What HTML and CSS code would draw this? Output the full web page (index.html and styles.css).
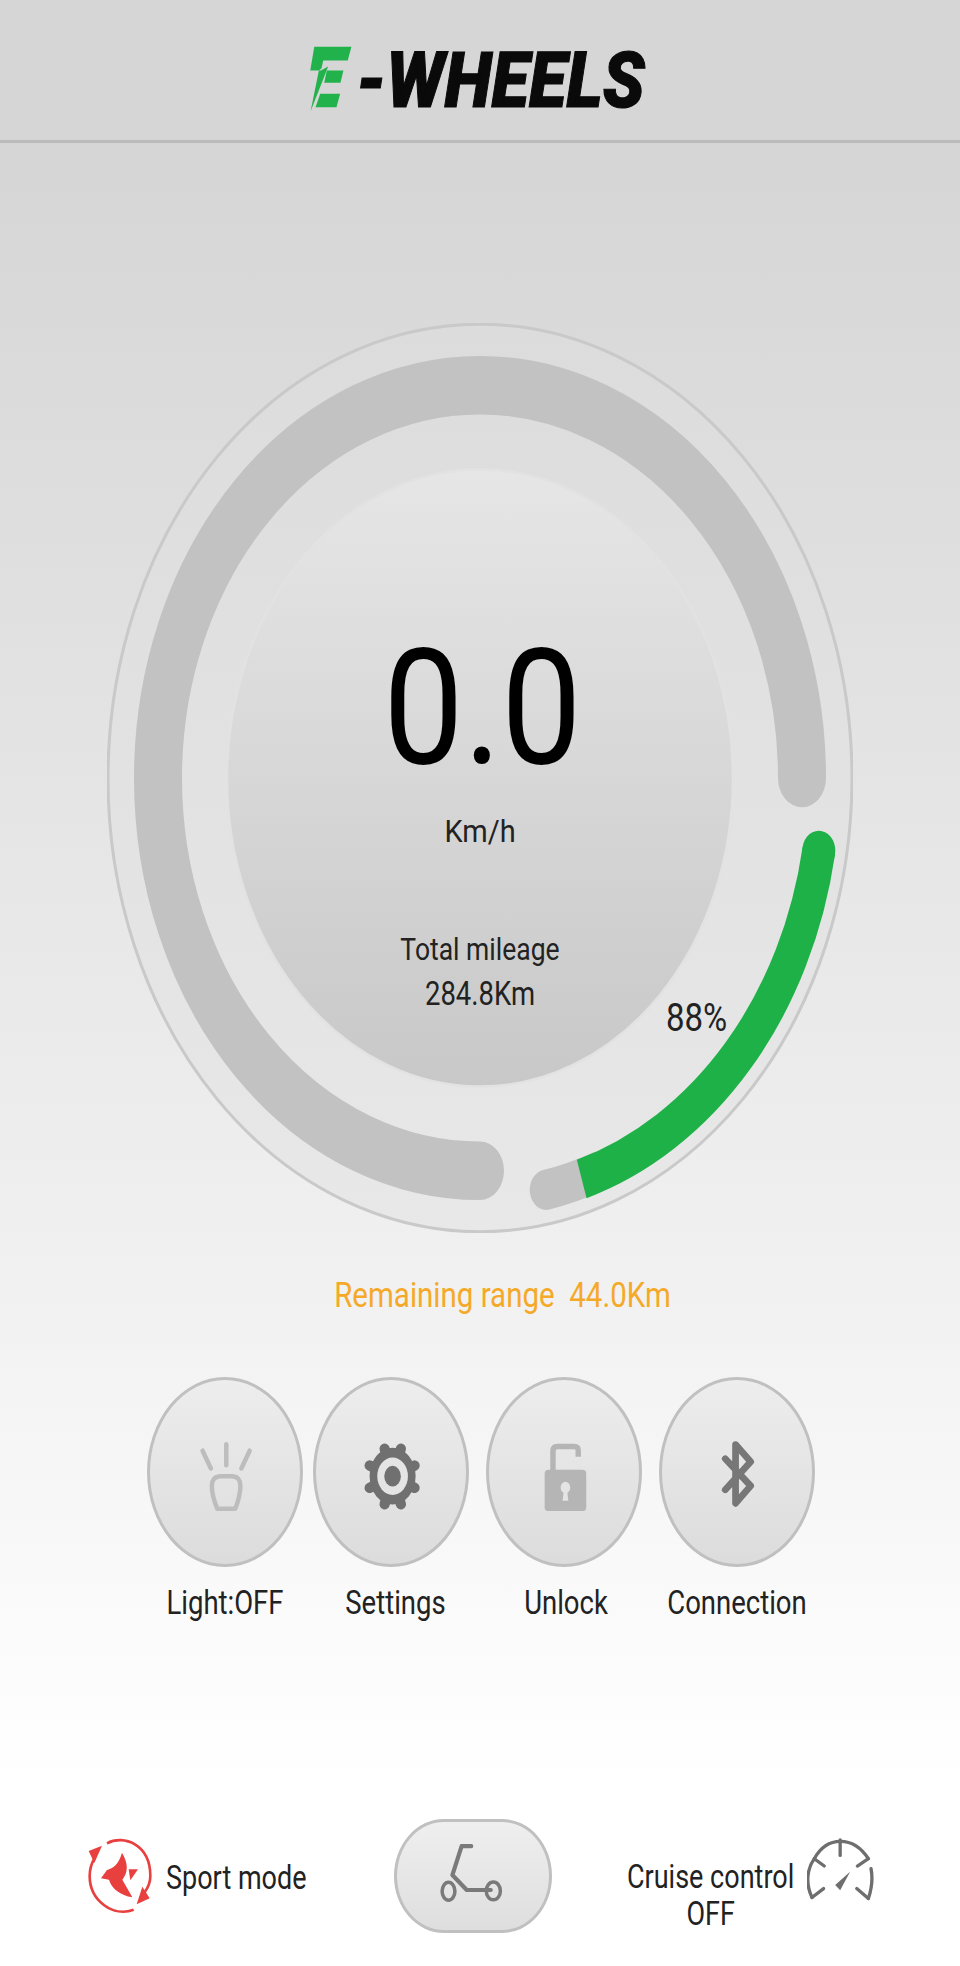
FILE: index.html
```html
<!DOCTYPE html>
<html lang="en">
<head>
    <meta charset="UTF-8">
    <meta name="viewport" content="width=device-width, initial-scale=1.0">
    <title>E-Wheels</title>
    <link rel="stylesheet" href="styles.css">
</head>
<body>
    <div id="wrapper">
        <header class="topBar">
            <svg class="logoMark" viewBox="96 145 125 205" aria-hidden="true">
                <polygon points="108,150 220,150 209,192 135,192 130,215 122,222 97,345 150,210 128,222 96,222" fill="#22b24c"/>
                <polygon points="146,222 196,222 187,259 138,259" fill="#22b24c"/>
                <polygon points="126,292 186,292 175,333 112,333" fill="#22b24c"/>
            </svg>
            <span class="logoText">-WHEELS</span>
        </header>

        <div class="gauge">
            <svg class="gaugeArt" viewBox="0 0 746 746" preserveAspectRatio="none" aria-hidden="true">
                <defs>
                    <linearGradient id="outerFill" x1="0" y1="0" x2="0" y2="1">
                        <stop offset="0" stop-color="#dcdcdc"/>
                        <stop offset="1" stop-color="#e8e8e8"/>
                    </linearGradient>
                    <linearGradient id="innerFill" x1="0" y1="0" x2="0" y2="1">
                        <stop offset="0" stop-color="#e6e6e6"/>
                        <stop offset="1" stop-color="#c8c8c8"/>
                    </linearGradient>
                </defs>
                <circle class="outerRing" cx="373" cy="373" r="372"/>
                <path class="track" d="M373 695 A322 322 0 1 1 695 373"/>
                <circle class="innerDisc" cx="373" cy="373" r="253"/>
                <path class="tail" d="M490 696 A344 344 0 0 1 439.2 710.6"/>
                <path class="charge" d="M711.8 432.7 A344 344 0 0 1 474.7 701.7"/>
                <circle class="chargeCap" cx="711.8" cy="432.7" r="16.5"/>
            </svg>
            <div class="readout">
                <div class="speed">0.0</div>
                <div class="unit tall">Km/h</div>
                <div class="mileage tall">Total mileage</div>
                <div class="mileageValue tall">284.8Km</div>
            </div>
            <div class="percent">88%</div>
        </div>

        <div class="range tall">Remaining range&nbsp; 44.0Km</div>

        <div class="controls">
            <div class="control">
                <button class="roundBtn" type="button">
                    <svg viewBox="50 52 468 570" preserveAspectRatio="none" aria-hidden="true">
                        <g fill="none" stroke="#bdbdbd" stroke-width="14" stroke-linecap="round" stroke-linejoin="round">
                            <path d="M214 271 L240 326 M288 251 L288 316 M361 271 L335 326"/>
                            <path d="M268 350 L308 350 Q332 352 332 380 Q332 410 316 451 L260 451 Q243 410 243 380 Q243 352 268 350 Z"/>
                        </g>
                    </svg>
                </button>
                <span class="ctrlLabel tall">Light:OFF</span>
            </div>
            <div class="control control-settings">
                <button class="roundBtn" type="button">
                    <svg viewBox="547 52 470 570" preserveAspectRatio="none" aria-hidden="true">
                        <path d="M787 350 L762 265 M787 350 L813 265 M787 350 L715 317 M787 350 L856 317 M787 350 L715 386 M787 350 L856 386 M787 350 L762 437 M787 350 L813 437" stroke="#707070" stroke-width="32" stroke-linecap="round"/>
                        <ellipse cx="787" cy="350" rx="72" ry="88" fill="#707070"/>
                        <ellipse cx="787" cy="350" rx="48" ry="58" fill="#e4e4e4"/>
                        <ellipse cx="787" cy="350" rx="26" ry="32" fill="#707070"/>
                    </svg>
                </button>
                <span class="ctrlLabel tall">Settings</span>
            </div>
            <div class="control control-unlock">
                <button class="roundBtn" type="button">
                    <svg viewBox="48 52 469 570" preserveAspectRatio="none" aria-hidden="true">
                        <path d="M248 335 L248 272 Q248 258 262 258 L314 258 Q327 258 327 270 L327 290" fill="none" stroke="#b5b5b5" stroke-width="17"/>
                        <rect x="222" y="330" width="130" height="128" rx="12" fill="#b5b5b5"/>
                        <ellipse cx="287" cy="385" rx="15" ry="18" fill="#e4e4e4"/>
                        <polygon points="282,392 292,392 296,426 278,426" fill="#e4e4e4"/>
                    </svg>
                </button>
                <span class="ctrlLabel tall">Unlock</span>
            </div>
            <div class="control control-connection">
                <button class="roundBtn" type="button">
                    <svg viewBox="568 52 467 570" preserveAspectRatio="none" aria-hidden="true">
                        <path d="M765 296 L844 380 L797 434 L797 252 L844 305 L765 392" fill="none" stroke="#777" stroke-width="21" stroke-linejoin="round" stroke-linecap="round"/>
                    </svg>
                </button>
                <span class="ctrlLabel tall">Connection</span>
            </div>
        </div>

        <div class="bottomBar">
            <div class="mode">
                <svg class="modeIcon" viewBox="50 105 195 240" aria-hidden="true">
                    <g fill="none" stroke="#e8403f" stroke-width="8">
                        <path d="M110 127 C160 100 240 130 240 225 C240 245 232 262 222 275"/>
                        <path d="M190 326 C130 350 58 300 58 225 C58 205 62 190 72 172"/>
                    </g>
                    <g fill="#e8403f">
                        <polygon points="55,150 95,134 72,186"/>
                        <polygon points="238,292 199,310 216,257"/>
                        <path d="M155 155 C176 190 172 215 156 236 L186 289 C150 282 125 265 116 236 L92 232 L110 207 C128 202 145 190 155 155 Z"/>
                        <polygon points="175,205 203,205 180,238"/>
                    </g>
                </svg>
                <span class="modeLabel tall">Sport mode</span>
            </div>
            <button class="scooterBtn" type="button">
                <svg viewBox="72 58 475 340" preserveAspectRatio="none" aria-hidden="true">
                    <g fill="none" stroke="#7a7a7a" stroke-linecap="round" stroke-linejoin="round">
                        <path d="M274 134 L304 134 M274 134 L245 225 L290 272 L365 272" stroke-width="13"/>
                        <ellipse cx="233" cy="276" rx="20" ry="28" stroke-width="11"/>
                        <ellipse cx="373" cy="275" rx="22" ry="28" stroke-width="11"/>
                    </g>
                </svg>
            </button>
            <div class="cruise">
                <div class="cruiseText">
                    <span class="tall">Cruise control</span>
                    <span class="tall">OFF</span>
                </div>
                <svg class="cruiseIcon" viewBox="590 110 202 192" aria-hidden="true">
                    <g fill="none" stroke="#6e6e6e" stroke-width="10" stroke-linecap="round">
                        <path d="M605 292 C585 250 590 205 612 175 C650 105 730 105 775 175"/>
                        <path d="M783 205 C790 240 785 265 775 295"/>
                        <path d="M690 118 L690 165 M612 175 L642 197 M775 175 L742 197 M640 265 L605 292 M740 265 L775 295"/>
                    </g>
                    <polygon points="720,214 675,254 690,270" fill="#6e6e6e"/>
                </svg>
            </div>
        </div>
    </div>
</body>
</html>
```

FILE: styles.css
```css
html, body {
    margin: 0;
    padding: 0;
}

body {
    font-family: Roboto, "Liberation Sans", sans-serif;
    color: #222222;
}

#wrapper {
    width: 960px;
    height: 1966px;
    overflow: hidden;
    background: linear-gradient(#d2d2d2 0, #e0e0e0 600px, #f0f0f0 1250px, #ffffff 1780px);
}

/* the whole screenshot is stretched vertically, text too */
.tall {
    display: block;
    transform: scaleY(1.2);
}

.topBar {
    height: 120px;
    padding: 20px 5px 0 0;
    border-bottom: 3px solid #bbbbbb;
    background: #d6d6d6;
    display: flex;
    justify-content: center;
    align-items: center;
    gap: 4px;
}

.logoMark {
    width: 42px;
    height: 68px;
    margin-top: -2px;
}

.logoText {
    font-family: Roboto, "Liberation Sans", sans-serif;
    font-size: 69px;
    font-weight: 900;
    font-style: italic;
    line-height: 1;
    color: #0a0a0a;
    -webkit-text-stroke: 1px #0a0a0a;
    transform: scaleY(1.12);
}

.gauge {
    position: relative;
    width: 746px;
    height: 910px;
    margin: 180px 0 0 107px;
    display: grid;
}

.gaugeArt,
.readout {
    grid-area: 1 / 1;
}

.gaugeArt {
    width: 746px;
    height: 910px;
}

.outerRing {
    fill: url(#outerFill);
    stroke: #c9c9c9;
    stroke-width: 3px;
    vector-effect: non-scaling-stroke;
}

.track {
    fill: none;
    stroke: #c2c2c2;
    stroke-width: 48;
    stroke-linecap: round;
}

.innerDisc {
    fill: url(#innerFill);
    stroke: #e2e2e2;
    stroke-width: 2.5px;
    vector-effect: non-scaling-stroke;
}

.tail {
    fill: none;
    stroke: #c2c2c2;
    stroke-width: 33;
    stroke-linecap: round;
}

.charge {
    fill: none;
    stroke: #1eb147;
    stroke-width: 33;
}

.chargeCap {
    fill: #1eb147;
}

.readout {
    padding-top: 320px;
    text-align: center;
}

.speed {
    margin-left: 5px;
    font-size: 143px;
    font-weight: 400;
    line-height: 130px;
    color: #000000;
    transform: scaleY(1.13);
}

.unit {
    margin-top: 38px;
    font-size: 29px;
    line-height: 40px;
    transform: scaleY(1.1);
}

.mileage {
    margin-top: 75px;
    font-size: 26.5px;
    line-height: 45px;
}

.mileageValue {
    font-size: 27.5px;
    line-height: 45px;
}

.percent {
    position: absolute;
    left: 559px;
    top: 678px;
    font-size: 33px;
    line-height: 34px;
    transform: scaleY(1.15);
}

.range {
    margin: 44px 0 0 45px;
    text-align: center;
    font-size: 29.5px;
    line-height: 36px;
    color: #f5a928;
}

.controls {
    margin: 64px 0 0 147px;
    display: flex;
}

.control {
    display: flex;
    flex-direction: column;
    align-items: center;
    width: 156px;
}

.control-settings {
    margin-left: 10px;
}

.control-unlock,
.control-connection {
    margin-left: 17px;
}

.roundBtn {
    width: 156px;
    height: 190px;
    box-sizing: border-box;
    padding: 0;
    border: 3px solid #c0c0c0;
    border-radius: 50%;
    background: linear-gradient(#ededed, #dcdcdc);
}

.roundBtn svg {
    display: block;
    width: 100%;
    height: 100%;
}

.ctrlLabel {
    margin-top: 18px;
    font-size: 27.5px;
    line-height: 36px;
    white-space: nowrap;
}

.control-settings .ctrlLabel {
    margin-left: 9px;
}

.control-unlock .ctrlLabel {
    margin-left: 4px;
}

.bottomBar {
    margin-top: 198px;
    height: 114px;
    display: flex;
    align-items: center;
}

.mode {
    display: flex;
    align-items: center;
    gap: 14px;
    margin-left: 87px;
    width: 307px;
}

.modeIcon {
    width: 65px;
    height: 80px;
}

.modeLabel {
    margin-top: 4px;
    font-size: 27px;
    line-height: 36px;
    white-space: nowrap;
}

.scooterBtn {
    width: 158px;
    height: 114px;
    box-sizing: border-box;
    padding: 0;
    border: 3px solid #c0c0c0;
    border-radius: 50px / 57px;
    background: linear-gradient(#efefef, #dedede);
}

.scooterBtn svg {
    display: block;
    width: 100%;
    height: 100%;
}

.cruise {
    align-self: flex-start;
    display: flex;
    align-items: flex-start;
    gap: 13px;
    margin-left: 75px;
}

.cruiseText {
    text-align: center;
    font-size: 27px;
    line-height: 37px;
    white-space: nowrap;
    padding-top: 40px;
}

.cruiseIcon {
    width: 67px;
    height: 64px;
    margin-top: 18px;
}
```
